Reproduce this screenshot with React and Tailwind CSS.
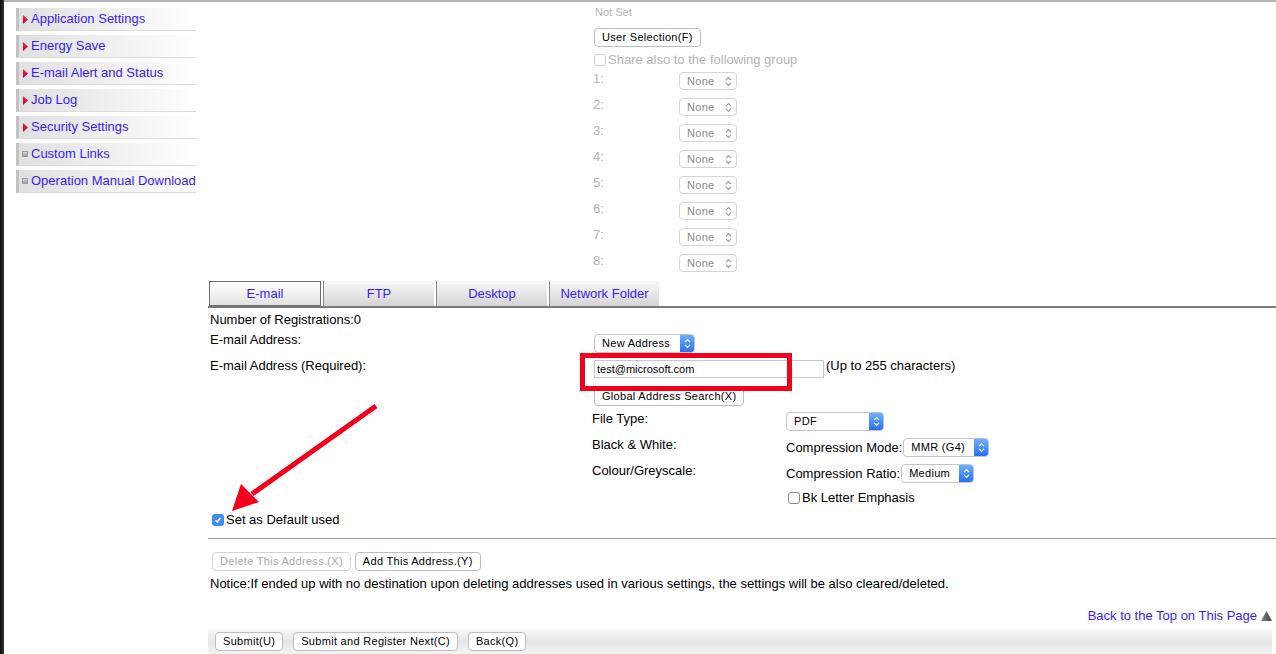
import React from 'react';

const font = "font-['Liberation_Sans',Arial,sans-serif]";
const link = 'text-[#3b1cf7]';

const menu = [
  { label: 'Application Settings', arrow: true },
  { label: 'Energy Save', arrow: true },
  { label: 'E-mail Alert and Status', arrow: true },
  { label: 'Job Log', arrow: true },
  { label: 'Security Settings', arrow: true },
  { label: 'Custom Links', arrow: false },
  { label: 'Operation Manual Download', arrow: false },
];

function Updown({ color = 'white' }) {
  return (
    <svg width="7" height="11" viewBox="0 0 7 11" fill="none" stroke={color} strokeWidth="1.2">
      <path d="M1 4.2 L3.5 1.7 L6 4.2 M1 6.8 L3.5 9.3 L6 6.8" />
    </svg>
  );
}

function MacButton({ children, disabled }) {
  return (
    <button
      className={`h-[19px] px-[7px] rounded-[4px] border border-[#bdbdbd] bg-white text-[11px] tracking-[0.3px] leading-none whitespace-nowrap ${
        disabled ? 'text-[#a9a9a9] border-[#d4d4d4]' : 'text-black'
      }`}
    >
      {children}
    </button>
  );
}

function BlueSelect({ label, className }) {
  return (
    <div className={`flex h-[19px] rounded-[4px] border border-[#c4c4c4] bg-white overflow-hidden ${className}`}>
      <span className="flex-1 pl-[7px] text-[11px] tracking-[0.3px] leading-[17px] text-black whitespace-nowrap">{label}</span>
      <span className="w-[14px] bg-gradient-to-b from-[#6eaeff] to-[#2b6ff0] flex items-center justify-center">
        <Updown />
      </span>
    </div>
  );
}

function NoneSelect() {
  return (
    <div className="flex items-center h-[18px] w-[58px] rounded-[4px] border border-[#d6d6d6] bg-white">
      <span className="flex-1 pl-[7px] text-[11px] tracking-[0.3px] text-[#8a8a8a]">None</span>
      <span className="pr-[4px] flex items-center">
        <Updown color="#9a9a9a" />
      </span>
    </div>
  );
}

function Box({ checked, faded }) {
  if (checked) {
    return (
      <span className="inline-flex w-[12px] h-[12px] rounded-[3px] bg-[#3c8df7] items-center justify-center">
        <svg width="8" height="8" viewBox="0 0 8 8" fill="none" stroke="white" strokeWidth="1.5">
          <path d="M1.5 4.2 L3.2 5.8 L6.5 2" />
        </svg>
      </span>
    );
  }
  return (
    <span
      className={`inline-block w-[12px] h-[12px] rounded-[3px] border bg-white ${
        faded ? 'border-[#cfcfcf]' : 'border-[#8d8d8d]'
      }`}
    />
  );
}

export default function App() {
  const tabs = [
    { t: 'E-mail', w: 'w-[112px]' },
    { t: 'FTP', w: 'w-[111px]' },
    { t: 'Desktop', w: 'w-[111px]' },
    { t: 'Network Folder', w: 'w-[110px]' },
  ];
  return (
    <div className={`relative w-[1276px] h-[654px] overflow-hidden bg-white flex ${font} text-[13px] text-black`}>
      {/* dark desktop edge */}
      <div className="w-[4px] h-full bg-gradient-to-r from-[#0c0c0c] to-[#3a3632]" />

      {/* sidebar */}
      <div className="w-[204px] h-full border-t-2 border-[#b4b4b4] pt-[6px]">
        {menu.map((m) => (
          <div
            key={m.label}
            className="ml-[12px] w-[180px] h-[23px] mb-[4px] flex items-center border-l-[3px] border-[#c2c2c2] border-b border-b-[#dcdcdc] bg-gradient-to-r from-[#e0e0e0] via-[#efefef] to-white"
          >
            <span className="w-[12px] flex justify-center">
              {m.arrow ? (
                <svg width="5" height="9" viewBox="0 0 5 9">
                  <defs>
                    <linearGradient id="rg" x1="0" y1="0" x2="0" y2="1">
                      <stop offset="0" stopColor="#ff2a55" />
                      <stop offset="1" stopColor="#b8001e" />
                    </linearGradient>
                  </defs>
                  <polygon points="0,0 5,4.5 0,9" fill="url(#rg)" />
                </svg>
              ) : (
                <span className="inline-block w-[6px] h-[6px] border border-[#9a9a9a] bg-gradient-to-b from-[#d8d8d8] to-[#9e9e9e]" />
              )}
            </span>
            <span className={`${link} whitespace-nowrap`}>{m.label}</span>
          </div>
        ))}
      </div>

      {/* main */}
      <div className="flex-1 h-full border-t-2 border-[#b4b4b4] flex flex-col">
        {/* group sharing (disabled) */}
        <div className="pl-[385px] text-[#b3b3b3]">
          <div className="pt-[3px] h-[20px] text-[11px] leading-[14px] pl-[2px]">Not Set</div>
          <div className="h-[24px] pt-[5px] pl-[1px]">
            <MacButton>User Selection(F)</MacButton>
          </div>
          <div className="h-[17px] mt-[5px] flex items-center gap-[2px] pl-[1px]">
            <Box faded />
            <span className="text-[#b5b5b5]">Share also to the following group</span>
          </div>
          {[1, 2, 3, 4, 5, 6, 7, 8].map((n) => (
            <div key={n} className="h-[26px] flex items-center">
              <span className="w-[86px] -mt-[4px]">{n}:</span>
              <NoneSelect />
            </div>
          ))}
        </div>

        {/* tabs */}
        <div className="mt-[5px] border-b-2 border-[#7a7a7a] flex gap-[2px] pl-[1px] h-[27px]">
          {tabs.map((tab, i) => (
            <div
              key={tab.t}
              className={`${tab.w} h-[25px] flex items-center justify-center ${link} ${
                i === 0
                  ? 'border border-[#6f6f6f] bg-gradient-to-b from-white to-[#e2e2e2]'
                  : 'border-l border-[#8a8a8a] bg-gradient-to-b from-[#f8f8f8] to-[#d4d4d4]'
              }`}
            >
              {tab.t}
            </div>
          ))}
        </div>

        {/* form */}
        <div className="pl-[2px]">
          <div className="h-[22px] flex items-center pt-[1px]">Number of Registrations:0</div>
          <div className="h-[26px] flex items-start">
            <span className="w-[384px]">E-mail Address:</span>
            <BlueSelect label="New Address" className="w-[101px] mt-[4px]" />
          </div>
          <div className="h-[28px] flex items-start">
            <span className="w-[384px]">E-mail Address (Required):</span>
            <div className="relative mt-[4px] flex items-center">
              <div className="w-[230px] h-[18px] border border-[#c8c8c8] bg-white text-[11px] leading-[17px] pl-[2px]">
                test@microsoft.com
              </div>
              <span className="ml-[2px] -mt-[6px]">(Up to 255 characters)</span>
              <div className="absolute left-[-14px] top-[-7px] w-[212px] h-[38px] border-[5px] border-[#f5001c]" />
            </div>
          </div>
          <div className="pl-[384px] pt-[2px]">
            <MacButton>Global Address Search(X)</MacButton>
          </div>

          <div className="pl-[382px] pt-[1px]">
            <div className="h-[28px] flex items-start">
              <span className="w-[194px] pt-[2px]">File Type:</span>
              <BlueSelect label="PDF" className="w-[98px] mt-[5px]" />
            </div>
            <div className="h-[26px] flex items-start">
              <span className="w-[194px]">Black &amp; White:</span>
              <div className="flex items-center mt-[3px]">
                <span>Compression Mode:</span>
                <BlueSelect label="MMR (G4)" className="w-[86px] ml-[1px]" />
              </div>
            </div>
            <div className="h-[26px] flex items-start">
              <span className="w-[194px]">Colour/Greyscale:</span>
              <div className="flex items-center mt-[3px]">
                <span>Compression Ratio:</span>
                <BlueSelect label="Medium" className="w-[73px] ml-[1px]" />
              </div>
            </div>
            <div className="h-[18px] mt-[2px] flex items-center pl-[196px] gap-[2px]">
              <Box />
              <span>Bk Letter Emphasis</span>
            </div>
          </div>

          <div className="h-[26px] flex items-center gap-[2px] pl-[2px]">
            <Box checked />
            <span>Set as Default used</span>
          </div>
        </div>

        <div className="mt-[5px] border-t border-[#9c9c9c]" />

        <div className="pl-[4px] pt-[13px] flex gap-[4px]">
          <MacButton disabled>Delete This Address.(X)</MacButton>
          <MacButton>Add This Address.(Y)</MacButton>
        </div>
        <div className="pl-[2px] h-[21px] flex items-center mt-[2px]">
          Notice:If ended up with no destination upon deleting addresses used in various settings, the settings will be also cleared/deleted.
        </div>

        <div className="flex justify-end items-center pr-[4px] mt-[13px] h-[18px]">
          <span className={link}>Back to the Top on This Page</span>
          <svg width="11" height="10" viewBox="0 0 11 10" className="ml-[4px]">
            <defs>
              <linearGradient id="tg" x1="0" y1="0" x2="1" y2="0">
                <stop offset="0" stopColor="#8a8a8a" />
                <stop offset="1" stopColor="#3a3a3a" />
              </linearGradient>
            </defs>
            <polygon points="5.5,0 11,10 0,10" fill="url(#tg)" />
          </svg>
        </div>

        <div className="mt-[4px] flex-1 mr-[4px] bg-gradient-to-b from-[#f8f8f8] via-[#e6e6e6] to-[#f4f4f4] flex items-center gap-[10px] pl-[7px]">
          <MacButton>Submit(U)</MacButton>
          <MacButton>Submit and Register Next(C)</MacButton>
          <MacButton>Back(Q)</MacButton>
        </div>
      </div>

      {/* annotation arrow */}
      <svg className="absolute left-0 top-0 pointer-events-none" width="1276" height="654">
        <line x1="376" y1="406" x2="252" y2="494" stroke="#f5001c" strokeWidth="5" />
        <polygon points="232,511 241,484 259,502" fill="#f5001c" />
      </svg>
    </div>
  );
}
